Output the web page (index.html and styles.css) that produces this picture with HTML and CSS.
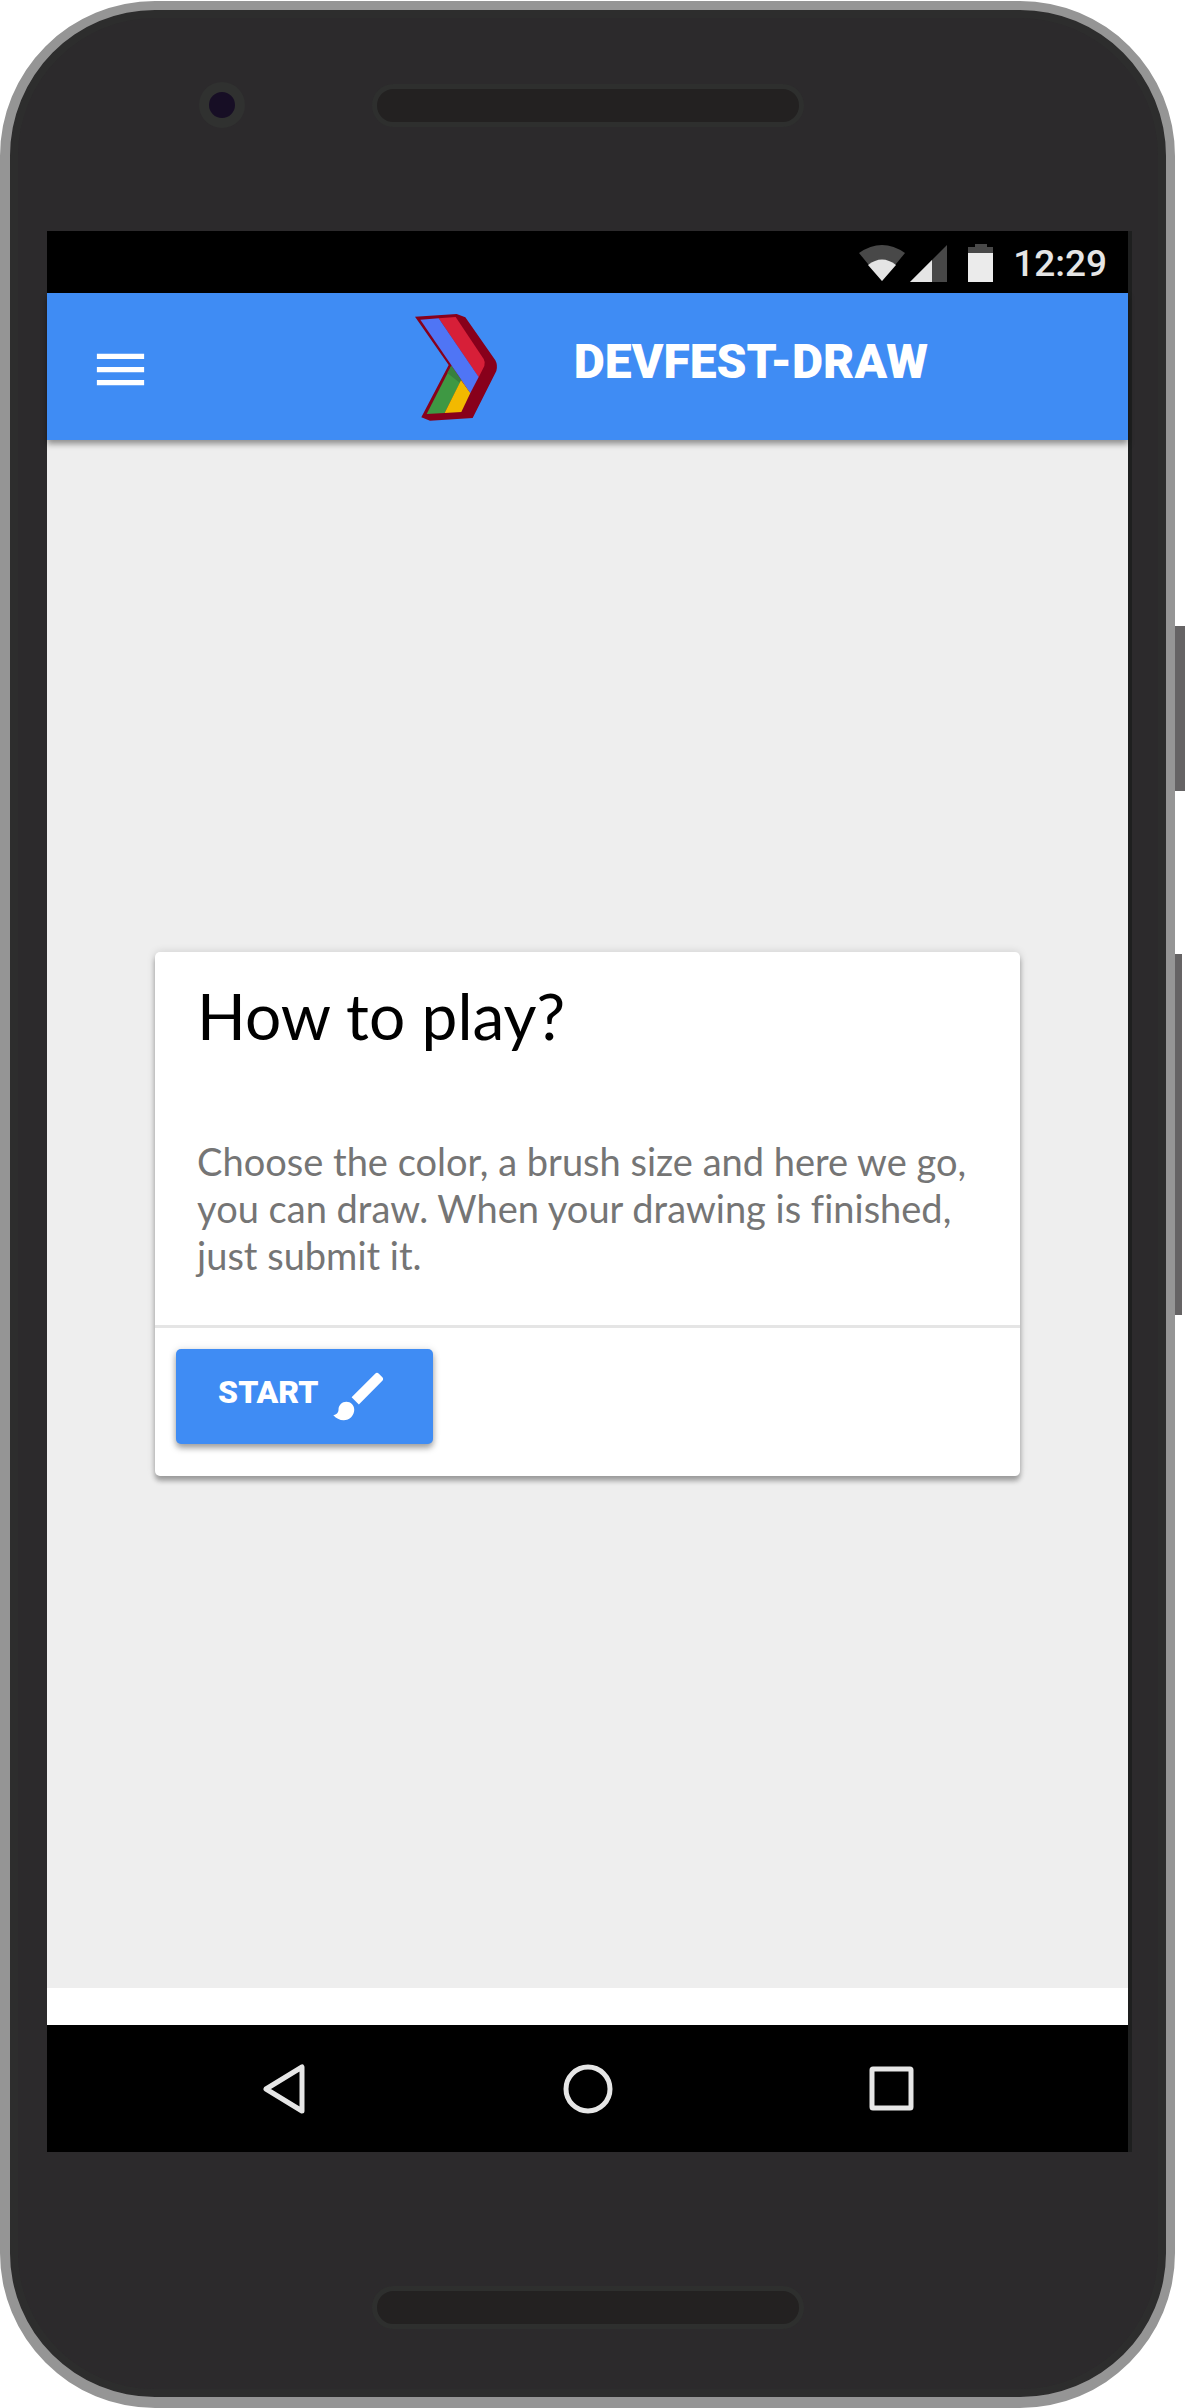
FILE: index.html
```html
<!DOCTYPE html>
<html lang="en">
<head>
<meta charset="utf-8">
<meta name="viewport" content="width=device-width, initial-scale=1">
<title>Devfest-Draw</title>
<link rel="stylesheet" href="styles.css">
</head>
<body>
<div class="device">
  <div class="phone">
    <div class="bezel bezel-top">
      <span class="camera"></span>
      <span class="speaker"></span>
    </div>
    <div class="screen">
      <div class="status-bar">
        <svg class="status-icons" viewBox="0 0 136 40" aria-hidden="true">
          <path fill="#484848" d="M0 9Q23 -7 46 9L23 37Z"/>
          <path fill="#e5e5e5" d="M9 21Q23 10 37 21L23 37Z"/>
          <path fill="#484848" d="M88 1V38H51Z"/>
          <path fill="#e5e5e5" d="M73 16V38H51Z"/>
          <path fill="#484848" d="M116 0h12v3h6v6h-25V3h7z"/>
          <path fill="#ebebeb" d="M109 9h25v29h-25z"/>
        </svg>
        <time class="clock">12:29</time>
      </div>
      <header class="app-bar">
        <button class="menu-button" type="button" aria-label="Menu">
          <svg viewBox="0 0 24 24" fill="currentColor"><path d="M3 18h18v-2H3v2zm0-5h18v-2H3v2zm0-7v2h18V6H3z"/></svg>
        </button>
        <svg class="logo" viewBox="186 783 264 330" aria-hidden="true">
          <path fill="#88001b" d="M195 797L320 789L346 799L436 928Q444 943 439 960L368 1101L240 1109L214 1099L296 942Z"/>
          <path fill="#d71f38" d="M266 802L317 798L401 924Q407 934 403 945L386 979Z"/>
          <path fill="#3e9843" d="M304 944L334 988L284 1086L230 1089Z"/>
          <path fill="#37803d" d="M304 944L334 988L330 996L292 966Z"/>
          <path fill="#f2b900" d="M333 988L361 1026L334 1083L284 1086Z"/>
          <path fill="#f29a00" d="M333 987L352 1003L362 1026Z"/>
          <path fill="#4f75f5" d="M211 806L266 802L386 978L361 1026Z"/>
        </svg>
        <h1 class="title">DEVFEST-DRAW</h1>
      </header>
      <main class="content">
        <section class="card">
          <h2 class="card-title">How to play?</h2>
          <p class="card-text">Choose the color, a brush size and here we go, you can draw. When your drawing is finished, just submit it.</p>
          <div class="card-actions">
            <button class="start-button" type="button">
              <span class="start-label">START</span>
              <svg class="brush" viewBox="0 0 24 24" fill="currentColor" aria-hidden="true"><path d="M7 14c-1.660 0-3 1.340-3 3 0 1.310-1.160 2-2 2 .92 1.220 2.490 2 4 2 2.210 0 4-1.790 4-4 0-1.660-1.340-3-3-3zm13.710-9.370l-1.340-1.340c-.39-.39-1.020-.39-1.410 0L9 12.250 11.750 15l8.960-8.960c.39-.39.39-1.020 0-1.410z"/></svg>
            </button>
          </div>
        </section>
      </main>
      <nav class="nav-bar">
        <button class="nav-button" type="button" aria-label="Back"><svg viewBox="0 0 50 50"><path d="M43 3V47L7 25Z"/></svg></button>
        <button class="nav-button" type="button" aria-label="Home"><svg viewBox="0 0 50 50"><circle cx="25" cy="25" r="22"/></svg></button>
        <button class="nav-button" type="button" aria-label="Recent apps"><svg viewBox="0 0 50 50"><rect x="5" y="5" width="39" height="39" rx="1"/></svg></button>
      </nav>
    </div>
    <div class="bezel bezel-bottom">
      <span class="speaker"></span>
    </div>
  </div>
  <div class="side-keys">
    <span class="key power"></span>
    <span class="key volume"></span>
  </div>
</div>
</body>
</html>
```
FILE: styles.css
```css
* { box-sizing: border-box; }

body {
  margin: 0;
  background: #fff;
  font-family: Lato, "Noto Sans", sans-serif;
}

h1, h2, p { margin: 0; }

button {
  border: 0;
  padding: 0;
  background: none;
  color: inherit;
  cursor: pointer;
}

svg { display: block; }

.device {
  display: flex;
  min-height: 100vh;
  padding-top: 1px;
}

/* Handset body */
.phone {
  flex: 1;
  display: flex;
  flex-direction: column;
  border: solid #959595;
  border-width: 9px 9px 11px 10px;
  border-radius: 155px;
  background: #2c2a2c;
  box-shadow: inset 0 0 0 8px #2d2d2d;
}

.bezel {
  display: flex;
  flex: none;
  justify-content: center;
}

.bezel-top {
  position: relative;
  height: 221px;
  padding-top: 74px;
}

.bezel-bottom {
  height: 245px;
  padding-top: 134px;
}

.speaker {
  width: 432px;
  height: 43px;
  border: 5px solid #2e2f2e;
  border-radius: 22px;
  background: #232121;
}

.camera {
  position: absolute;
  top: 72px;
  left: 189px;
  width: 46px;
  height: 46px;
  border: 10px solid #303130;
  border-radius: 50%;
  background: #170e25;
}

.side-keys {
  display: flex;
  flex-direction: column;
  gap: 163px;
  width: 10px;
  padding-top: 625px;
}

.key { background: #656364; }
.power { height: 165px; }
.volume { width: 7px; height: 361px; }

/* Display */
.screen {
  flex: 1;
  display: flex;
  flex-direction: column;
  margin: 0 38px 0 37px;
  background: #fff;
  box-shadow: 4px 0 #1e1f1f;
}

.status-bar {
  display: flex;
  align-items: center;
  justify-content: flex-end;
  gap: 18px;
  height: 62px;
  padding: 4px 21px 0 0;
  background: #000;
}

.status-icons { width: 136px; height: 40px; }

.clock {
  color: #e5e5e5;
  font: 500 37px/40px Roboto, sans-serif;
}

.app-bar {
  display: flex;
  align-items: center;
  z-index: 1;
  height: 147px;
  padding-left: 42px;
  background: #3f8cf4;
  color: #fff;
  box-shadow: 0 4px 6px rgba(0, 0, 0, .4);
}

.menu-button { padding-top: 6px; }

.menu-button svg { width: 63px; height: 63px; }

.logo {
  width: 88px;
  height: 110px;
  margin-left: 25%;
}

.title, .start-label {
  font-family: Roboto, sans-serif;
  font-weight: 900;
}

.title {
  margin-left: 74px;
  padding-bottom: 10px;
  font-size: 48px;
  line-height: 64px;
}

.content {
  flex: 1;
  display: flex;
  align-items: center;
  justify-content: center;
  margin-bottom: 37px;
  background: #eee;
}

.card {
  width: 80%;
  border-radius: 5px;
  background: #fff;
  box-shadow: 0 5px 5px rgba(0, 0, 0, .3), 0 0 8px rgba(0, 0, 0, .14);
}

.card-title {
  padding: 26px 42px 38px;
  color: #000;
  font-size: 64px;
  font-weight: 400;
  line-height: 76px;
}

.card-text {
  padding: 46px 42px;
  color: #757575;
  font-size: 38px;
  font-variant-ligatures: none;
  line-height: 47px;
}

.card-actions {
  padding: 21px 21px 32px;
  border-top: 3px solid #e5e5e5;
}

.start-button {
  display: flex;
  align-items: center;
  gap: 9px;
  height: 95px;
  padding: 0 42px;
  border-radius: 5px;
  background: #3f8cf4;
  color: #fff;
  box-shadow: 0 4px 6px rgba(0, 0, 0, .35), 0 0 8px rgba(0, 0, 0, .1);
}

.start-label {
  padding-bottom: 10px;
  font-size: 32px;
  line-height: 40px;
}

.brush { width: 63px; height: 63px; }

/* System navigation */
.nav-bar {
  display: flex;
  align-items: center;
  justify-content: center;
  gap: 254px;
  height: 127px;
  background: #000;
}

.nav-button, .nav-button svg { width: 50px; height: 50px; }

.nav-button svg {
  fill: none;
  stroke: #e6e6e6;
  stroke-width: 5;
  stroke-linejoin: round;
}
```
